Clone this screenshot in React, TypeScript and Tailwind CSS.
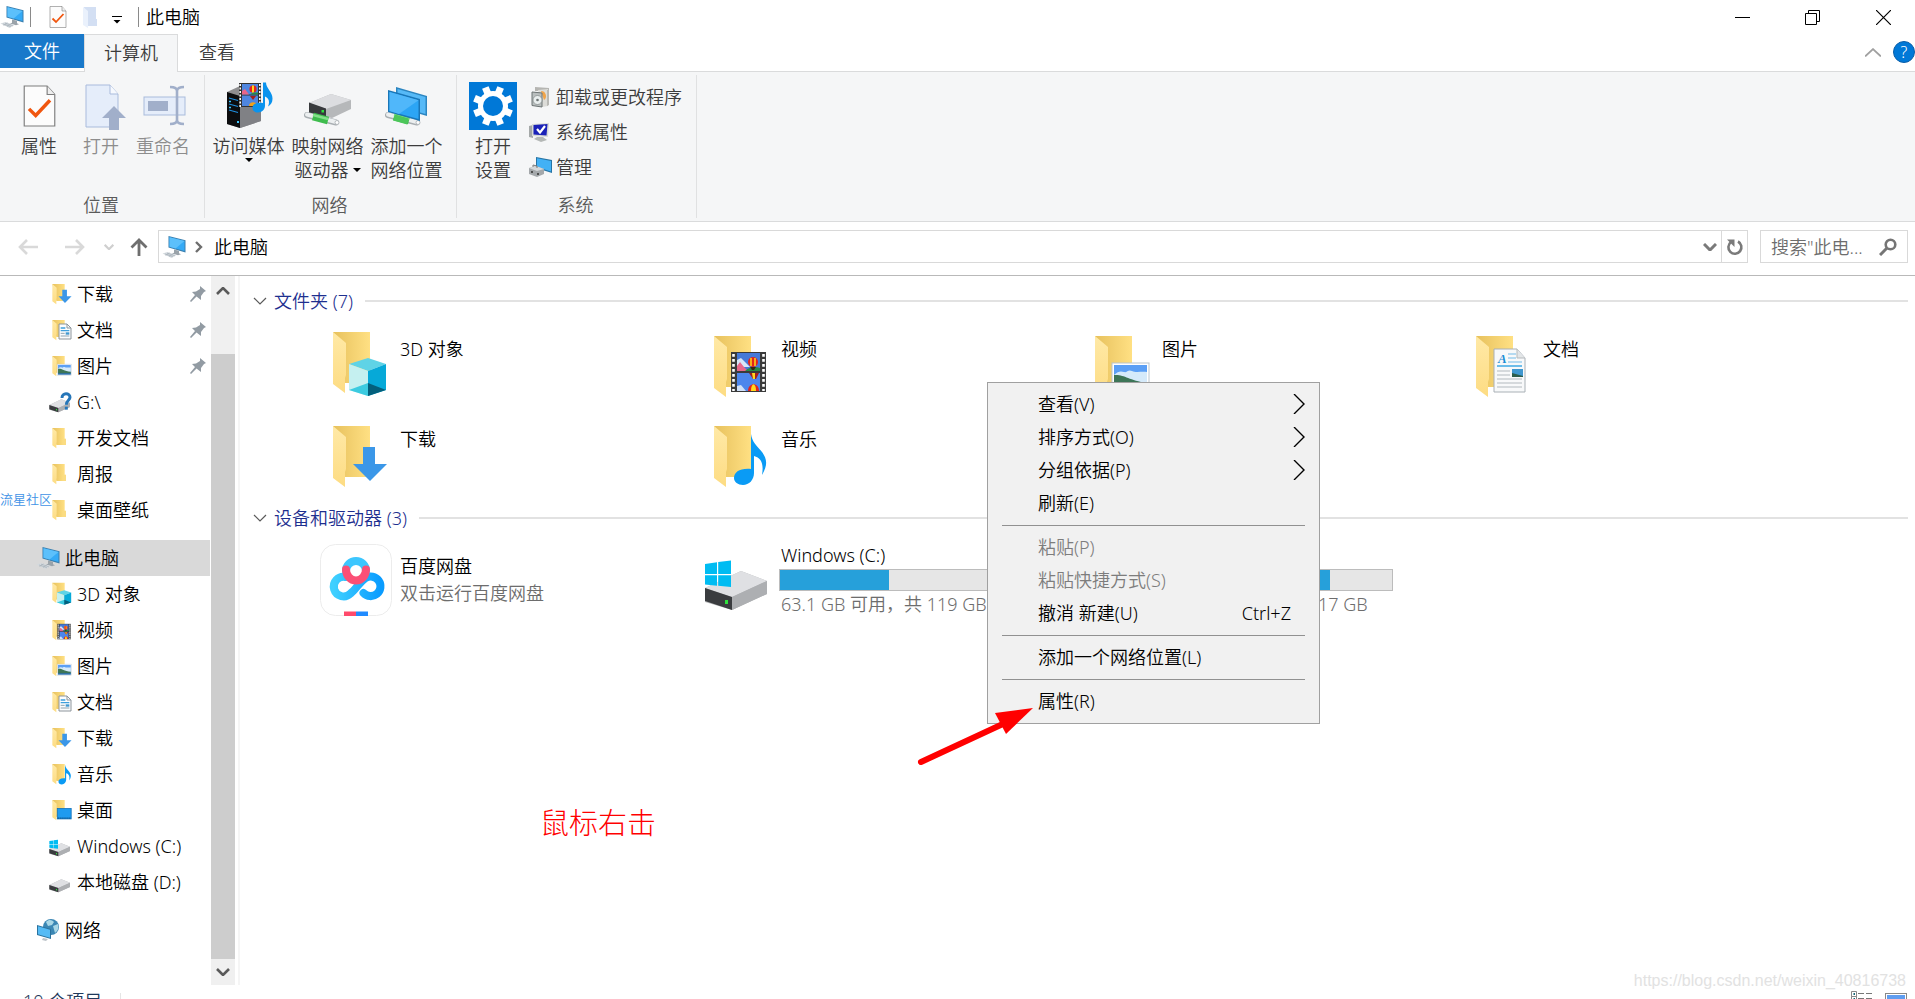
import { type ReactNode } from "react"

type Overlay = "download" | "document" | "picture" | "cube" | "video" | "music" | "desktop" | "none"

interface IconProps {
  className?: string
}

interface TreeItem {
  label: string
  icon: ReactNode
  pinned?: boolean
}

interface MenuItem {
  label: string
  submenu?: boolean
  disabled?: boolean
  shortcut?: string
}

function OverlayArt({ kind }: { kind: Overlay }) {
  if (kind === "download") {
    return <path d="M43 27h12v17h12L50 61 33 44h10z" fill="#3b97e8" />
  }
  if (kind === "music") {
    return (
      <path
        d="M50 14c1 8 6 12 11 18 5 7 6 13 0 23 2-12-1-17-8-19v17c0 7-5 12-11 12-5 0-9-3-9-7 0-6 6-10 17-9z"
        fill="#0a9bf5"
      />
    )
  }
  if (kind === "cube") {
    return (
      <g>
        <path d="M29 34l19-6 18 6-18 7z" fill="#5fd3e6" />
        <path d="M29 34l19 7v25l-19-6z" fill="#c5f0f0" />
        <path d="M66 34l-18 7v25l18-6z" fill="#06a9d8" />
        <path d="M29 60l19-7v13z" fill="#3ccbe0" />
        <path d="M66 60l-18-7v13z" fill="#03607c" />
      </g>
    )
  }
  if (kind === "video") {
    return (
      <g>
        <rect x="30" y="22" width="35" height="40" fill="#3a3a3a" />
        <path d="M32.5 24v37M62.5 24v37" stroke="#fff" strokeWidth="2.6" strokeDasharray="2.8 2.2" />
        <rect x="36" y="23" width="23" height="18" fill="#4579d8" />
        <rect x="36" y="43" width="23" height="18" fill="#4c86ec" />
        <path d="M36 30l4-2 6 6 3 3H36z" fill="#d7e6f8" />
        <path d="M36 36l3-4 4 5 4 4H36z" fill="#e8668a" />
        <path d="M44 41c4-4 10-5 15-3v3z" fill="#278a46" />
        <circle cx="52" cy="32" r="5" fill="#e3241c" />
        <path d="M50 28v8M54 28v8" stroke="#ffd91c" strokeWidth="1.5" />
        <path d="M49 37h6l-2 3h-2z" fill="#3a2610" />
        <path d="M48 43h10l-3 6h-3z" fill="#a3201c" />
        <path d="M51 43h3v6h-2z" fill="#ffd91c" />
        <path d="M36 56l4-1 5 6h-9z" fill="#cfe0f8" />
        <path d="M47 61c0-9 11-9 11 0z" fill="#e3241c" />
        <path d="M50 61c0-9 5-9 5 0z" fill="#ffd91c" />
      </g>
    )
  }
  if (kind === "picture") {
    return (
      <g>
        <rect x="30" y="33" width="37" height="29" fill="#fff" stroke="#b9c4cc" />
        <rect x="32" y="35" width="33" height="25" fill="#5b9ff5" />
        <path d="M32 45c4-4 7-4 10-3s4-3 8-1 10 0 15 1v13H32z" fill="#d5eafa" />
        <path d="M32 45c10-1 14 5 33 8v4H32z" fill="#3d7557" />
        <rect x="32" y="56" width="33" height="4" fill="#2f6f9c" />
      </g>
    )
  }
  if (kind === "document") {
    return (
      <g>
        <path d="M31 19h23l8 9v34H31z" fill="#f8f9fa" stroke="#a9b0b6" />
        <path d="M54 19v9h8" fill="#e3e6e8" stroke="#b5babd" />
        <text x="35" y="33" fontSize="13" fontStyle="italic" fontWeight="700" fontFamily="Liberation Serif, serif" fill="#1d8fd6">A</text>
        <path d="M45 24h8M45 28h8M45 32h14" stroke="#9fd0ee" strokeWidth="1.4" />
        <path d="M34 36h25" stroke="#6dbdea" strokeWidth="2" />
        <path d="M34 41h13M34 45h13M34 49h25M34 53h25M34 57h25" stroke="#c9ced2" strokeWidth="1.4" />
        <rect x="49" y="39" width="11" height="8" fill="#3f97cf" />
        <path d="M49 43l11 3v1H49z" fill="#2b5d4b" />
      </g>
    )
  }
  if (kind === "desktop") {
    return (
      <g>
        <rect x="30" y="34" width="36" height="27" fill="#1e9bf0" stroke="#0f6fb8" strokeWidth="2" />
        <path d="M31 59h34" stroke="#0b4f86" strokeWidth="3" strokeDasharray="3 2" />
      </g>
    )
  }
  return null
}

// Small folders carry a slightly enlarged overlay so it stays readable,
// and a simpler page drawing for documents
function SmallDocument() {
  return (
    <g>
      <path d="M33 18h24l12 12v33H33z" fill="#fbfcfd" stroke="#8d959b" strokeWidth="3" />
      <path d="M57 18v12h12" fill="none" stroke="#8d959b" strokeWidth="3" />
      <path d="M38 30h14M38 38h26" stroke="#3f9fdc" strokeWidth="4" />
      <path d="M38 46h12M38 54h26" stroke="#8fa3b0" strokeWidth="3" />
      <rect x="53" y="43" width="11" height="7" fill="#3f97cf" />
    </g>
  )
}

function FolderIcon({ kind = "none", small = false }: { kind?: Overlay; small?: boolean }) {
  return (
    <svg viewBox="0 0 72 72" className={small ? "size-6 shrink-0" : "size-[72px] shrink-0"}>
      <defs>
        <linearGradient id="folderBack" x1="0" y1="0" x2="1" y2="0">
          <stop offset="0" stopColor="#e7c15d" />
          <stop offset="1" stopColor="#ffe083" />
        </linearGradient>
        <linearGradient id="folderFlap" x1="0" y1="0" x2="0" y2="1">
          <stop offset="0" stopColor="#ffe9a6" />
          <stop offset="1" stopColor="#fddc83" />
        </linearGradient>
      </defs>
      <g transform={kind === "cube" ? "translate(0 -4)" : undefined}>
        <path d="M13 6h37v51H25z" fill="url(#folderBack)" />
        {kind === "none" && <path d="M44 38h10v19H44z" fill="#fbdc82" />}
        <path d="M13 6l13 11v32l-1 3v15L13 58z" fill="url(#folderFlap)" />
      </g>
      {small && kind === "document" ? (
        <SmallDocument />
      ) : (
        <g transform={small ? "translate(-7 -8) scale(1.16)" : undefined}>
          <OverlayArt kind={kind} />
        </g>
      )}
    </svg>
  )
}

function ComputerIcon({ className = "size-6" }: IconProps) {
  return (
    <svg viewBox="0 0 24 24" className={className}>
      <path d="M6.500 1l17 4.300v12.200L6.500 12.500z" fill="#3a7fae" />
      <path d="M7.500 2.200l15 3.900v10l-15-4.400z" fill="#35aaf6" />
      <path d="M7.500 2.200l15 3.900-9 7.300-6-1.700z" fill="#5cc0fb" />
      <path d="M12 14.500l5 1.300v2.500l2 1-3 1-6-1.800 2-.8z" fill="#9aa3aa" />
      <path d="M.5 18.500l5-1.500 9 3-5 3z" fill="#d3d9de" />
      <path d="M3 19l8 2.800M5 18.200l8 2.700M3.500 20.500l4-2.500M7 21.500l4-2.600" stroke="#a3adb5" strokeWidth=".6" />
    </svg>
  )
}

function DriveArt() {
  return (
    <g>
      <path d="M4 42l36-17 26 10v13L31 64 4 56z" fill="#b4b6b8" />
      <path d="M4 42l36-17 26 10-35 16z" fill="#dfe0e3" />
      <path d="M31 51l35-16v13L31 64z" fill="#adafb2" />
      <path d="M4 42l27 9v13L4 55z" fill="#3a3c3f" />
      <rect x="24" y="54" width="3" height="4" fill="#2fe23d" />
    </g>
  )
}

function DriveIcon({ windows = false, unknown = false, className = "size-6" }: IconProps & { windows?: boolean; unknown?: boolean }) {
  return (
    <svg viewBox="0 0 72 72" className={className}>
      <g transform="translate(0 3)">
        <DriveArt />
      </g>
      {windows && (
        <path d="M4 21l12-1.800V31H4zM17.200 19L30 17.500V31H17.200zM4 32.200h12v10.500L4 41.500zM17.200 32.200H30V44l-12.800-1.200z" fill="#00bcf2" />
      )}
      {unknown && (
        <g fill="none" stroke="#2676b8" strokeWidth="9">
          <path d="M42 24c0-17 24-16 24-2 0 9-11 9-11 22" />
          <path d="M55 50v9" />
        </g>
      )}
    </svg>
  )
}

function NetworkIcon() {
  return (
    <svg viewBox="0 0 24 24" className="size-6">
      <circle cx="15" cy="9" r="8" fill="#3b87b4" />
      <path d="M10 4c3-3 6-2 8 0l-2 3-4 1zM17 8l5-2c1 4 0 7-3 9z" fill="#a9d7e6" />
      <path d="M1 7l14 4v10L1 17z" fill="#2b739f" />
      <path d="M2 8.300l12 3.400v8L2 16.200z" fill="#55bbf5" />
      <path d="M7 20l5 1-2 2-4-1z" fill="#bcc3c8" />
    </svg>
  )
}

function CheckPageIcon({ className }: IconProps) {
  return (
    <svg viewBox="0 0 34 44" className={className}>
      <path d="M1 1h24l8 9v33H1z" fill="#fcfcfc" stroke="#7d7d7d" strokeWidth="1.200" />
      <path d="M25 1v9h8" fill="#eee" stroke="#7d7d7d" strokeWidth="1.200" />
      <path d="M6 25l7 7 15-16" fill="none" stroke="#f0560f" strokeWidth="3.600" />
    </svg>
  )
}

function OpenIcon() {
  return (
    <svg viewBox="0 0 42 48" className="h-12 w-[42px]">
      <path d="M1 3h24l8 9v33H1z" fill="#e5edfa" stroke="#a9bbdc" />
      <path d="M25 3v9h8" fill="#f6f9fe" stroke="#a9bbdc" />
      <path d="M29 24l12 12h-7v12H24V36h-7z" fill="#a1afca" />
    </svg>
  )
}

function RenameIcon() {
  return (
    <svg viewBox="0 0 44 48" className="h-12 w-11">
      <rect x="1" y="15" width="41" height="18" fill="#e5edfa" stroke="#a9bbdc" />
      <rect x="5" y="19" width="20" height="10" fill="#a1afca" />
      <path d="M34 8v32M27 5c4 0 7 1 7 4 0-3 3-4 7-4M27 42c4 0 7-1 7-4 0 3 3 4 7 4" fill="none" stroke="#a1afca" strokeWidth="2.600" />
    </svg>
  )
}

function MediaIcon() {
  return (
    <svg viewBox="0 0 48 48" className="size-12">
      <path d="M2 10l13-6 21 4v31L15 46 2 42z" fill="#8e8e90" />
      <path d="M15 14l21-6v31l-21 7z" fill="#808185" />
      <path d="M2 10l13 4v32L2 42z" fill="#0c0d0f" />
      <path d="M4 16l9 2.500M4 22l9 2.500M4 28l9 2.500" stroke="#1f8fe0" strokeWidth="1.200" />
      <path d="M4 19.500h2M4 25.500h2" stroke="#40c8ff" strokeWidth="1.600" />
      <rect x="12" y="39" width="2" height="2" fill="#40c8ff" />
      <rect x="14" y="1" width="22" height="24" fill="#333" />
      <path d="M15.200 2v23M34.800 2v23" stroke="#fff" strokeWidth="1.600" strokeDasharray="2 1.500" />
      <rect x="17" y="2" width="16" height="10.500" fill="#4f86e0" />
      <rect x="17" y="13.500" width="16" height="10.500" fill="#4f86e0" />
      <circle cx="28" cy="7" r="3.600" fill="#e3241c" />
      <path d="M28 3.500v7" stroke="#ffd91c" strokeWidth="2" />
      <path d="M17 9l3-2 4 5.500h-7z" fill="#e8668a" />
      <path d="M25 12.500c2-2 5-2 8-2v2z" fill="#278a46" />
      <path d="M24 24c0-5 8-5 8 0z" fill="#f0a01c" />
      <path d="M25 14h6l-3 4z" fill="#a3201c" />
      <path d="M38 .5h3c0 6 6.500 9 6.500 16 0 4-1.500 6-4.500 8 2-5 1-8-3-10v9c0 4-3 7-7 7-3.500 0-5.500-2-5.500-4.500 0-4 4-6 10.500-5z" fill="#0a93ee" />
    </svg>
  )
}

function Cable() {
  return (
    <g>
      <path d="M3 30l29 7.500" stroke="#a9afb3" strokeWidth="6" strokeLinecap="round" />
      <path d="M3 29.500l29 7.500" stroke="#eceff0" strokeWidth="4" strokeLinecap="round" />
      <circle cx="33" cy="37.500" r="2" fill="#fff" stroke="#b5babd" />
      <path d="M9 31.500l15 4" stroke="#3ebc4d" strokeWidth="8" />
      <path d="M9 30l15 4" stroke="#84e08b" strokeWidth="2.500" />
    </g>
  )
}

function MapDriveIcon() {
  return (
    <svg viewBox="0 0 48 42" className="h-[42px] w-12">
      <path d="M5 18l22-9 20 6v9L28 33 5 28z" fill="#b6b8ba" />
      <path d="M5 18l22-9 20 6-25 9z" fill="#dcdde0" />
      <path d="M5 17.500l17 6v10L5 28z" fill="#37393c" />
      <rect x="17.500" y="25" width="2.500" height="2.500" fill="#2fe23d" />
      <Cable />
    </svg>
  )
}

function NetworkPlaceIcon() {
  return (
    <svg viewBox="0 0 44 42" className="h-[42px] w-11">
      <path d="M11 2l31 9v20l-31-9z" fill="#2c85c0" />
      <path d="M12.500 4l28 8v17l-28-8z" fill="#56b9f7" />
      <Cable />
      <path d="M3 5l32 9v22L3 27z" fill="#1976b8" />
      <path d="M4.500 7l29 8.200V34L4.500 26z" fill="#2ca5f5" />
      <path d="M4.500 7l29 8.200L14 29l-9.500-3z" fill="#50b7fa" />
      <path d="M9 32.500l14 4" stroke="#4cc65a" strokeWidth="6" />
    </svg>
  )
}

function SettingsIcon() {
  return (
    <svg viewBox="0 0 48 48" className="size-12">
      <rect width="48" height="48" fill="#0078d7" />
      <g fill="#fff" transform="rotate(22.500 24 24)">
        <rect x="20.500" y="4" width="7" height="40" />
        <rect x="20.500" y="4" width="7" height="40" transform="rotate(45 24 24)" />
        <rect x="20.500" y="4" width="7" height="40" transform="rotate(90 24 24)" />
        <rect x="20.500" y="4" width="7" height="40" transform="rotate(135 24 24)" />
        <circle cx="24" cy="24" r="15" />
      </g>
      <circle cx="24" cy="24" r="10" fill="#0078d7" />
    </svg>
  )
}

function ProgramsIcon() {
  return (
    <svg viewBox="0 0 22 22" className="size-[22px]">
      <path d="M5 1l14 1v3H5z" fill="#b5b5b2" />
      <path d="M8 4l10-1v17l-6 1z" fill="#dcdcd8" />
      <path d="M17 4h2v15l-2 1z" fill="#b9b9b5" />
      <path d="M11 5a5 5 0 0 1 3 9z" fill="#f0a44a" />
      <path d="M2 6l10 1v14l-10-1.500z" fill="#b9bebe" stroke="#6d7474" />
      <circle cx="7.500" cy="14" r="4.500" fill="#e9eeee" stroke="#7f8787" strokeWidth=".7" />
      <circle cx="7.500" cy="14" r="1.300" fill="#6d7474" />
    </svg>
  )
}

function SystemIcon() {
  return (
    <svg viewBox="0 0 22 22" className="size-[22px]">
      <path d="M1 5l4-1v13l-4-1z" fill="#a4a8a8" />
      <path d="M4 3l17-1-1 14L4 15z" fill="#d7dad6" />
      <path d="M5.500 4l14-1-1 11.500-13-1z" fill="#1a22b8" />
      <path d="M9 8l3 3.500L17 5" fill="none" stroke="#fff" strokeWidth="2.200" />
      <path d="M9 16h6l4 3-6 2-7-3z" fill="#b4b8b6" />
    </svg>
  )
}

function ManageIcon() {
  return (
    <svg viewBox="0 0 24 22" className="h-[22px] w-6">
      <path d="M8 1l16 3v13L8 12z" fill="#2674a5" />
      <path d="M9 2.200l14 2.700v10.700L9 11z" fill="#42b1f5" />
      <path d="M1 12l7-2 8 3v5l-7 3-8-3z" fill="#a4a8ab" />
      <path d="M1 12l7-2 8 3-7 2z" fill="#d5d8da" />
      <path d="M5 11V9l4 1v2" fill="none" stroke="#777" />
      <path d="M4 15v2M10 17v2" stroke="#333" strokeWidth="1.500" />
    </svg>
  )
}

function BaiduIcon() {
  return (
    <svg viewBox="0 0 72 72" className="size-[72px] shrink-0">
      <defs>
        <linearGradient id="baiduBlue" x1="0" y1="0" x2="1" y2="0">
          <stop offset="0" stopColor="#3fd0ff" />
          <stop offset="1" stopColor="#0a9cff" />
        </linearGradient>
      </defs>
      <rect x=".5" y=".5" width="71" height="71" rx="15" fill="#fff" stroke="#ececec" />
      <g fill="none" strokeWidth="8" strokeLinecap="round">
        <path d="M43.500 49a9.800 9.800 0 1 0 2-15c-7 5-9 11-15 15.500a9.800 9.800 0 1 1-5-16.500" stroke="url(#baiduBlue)" />
        <path d="M26 27a10 10 0 0 1 20 0" stroke="#3cc6fe" />
        <path d="M26 25.500a10 11 0 0 0 20 0" stroke="#fb4f76" />
      </g>
      <path d="M24 67.500h12V72H24z" fill="#ff4a6b" />
      <path d="M36 67.500h12V72H36z" fill="#1f8bff" />
    </svg>
  )
}

function PinIcon() {
  return (
    <svg viewBox="0 0 16 16" className="size-4">
      <path d="M10 0l6 5-2 1-3 4v4L6.500 10.500 1 16l-1-1 5-6L2 6l4-.5L10 3z" fill="#929ba3" />
    </svg>
  )
}

function Chevron({ className, d = "M1 1l6 6 6-6", width = 1.2 }: IconProps & { d?: string; width?: number }) {
  return (
    <svg viewBox="0 0 14 8" className={className}>
      <path d={d} fill="none" stroke="currentColor" strokeWidth={width} />
    </svg>
  )
}

const quickAccess: TreeItem[] = [
  { label: "下载", icon: <FolderIcon kind="download" small />, pinned: true },
  { label: "文档", icon: <FolderIcon kind="document" small />, pinned: true },
  { label: "图片", icon: <FolderIcon kind="picture" small />, pinned: true },
  { label: "G:\\", icon: <DriveIcon unknown /> },
  { label: "开发文档", icon: <FolderIcon small /> },
  { label: "周报", icon: <FolderIcon small /> },
  { label: "桌面壁纸", icon: <FolderIcon small /> },
]

const computerItems: TreeItem[] = [
  { label: "3D 对象", icon: <FolderIcon kind="cube" small /> },
  { label: "视频", icon: <FolderIcon kind="video" small /> },
  { label: "图片", icon: <FolderIcon kind="picture" small /> },
  { label: "文档", icon: <FolderIcon kind="document" small /> },
  { label: "下载", icon: <FolderIcon kind="download" small /> },
  { label: "音乐", icon: <FolderIcon kind="music" small /> },
  { label: "桌面", icon: <FolderIcon kind="desktop" small /> },
  { label: "Windows (C:)", icon: <DriveIcon windows /> },
  { label: "本地磁盘 (D:)", icon: <DriveIcon /> },
]

const folders: { label: string; kind: Overlay }[] = [
  { label: "3D 对象", kind: "cube" },
  { label: "视频", kind: "video" },
  { label: "图片", kind: "picture" },
  { label: "文档", kind: "document" },
  { label: "下载", kind: "download" },
  { label: "音乐", kind: "music" },
  { label: "桌面", kind: "desktop" },
]

const menuSections: MenuItem[][] = [
  [
    { label: "查看(V)", submenu: true },
    { label: "排序方式(O)", submenu: true },
    { label: "分组依据(P)", submenu: true },
    { label: "刷新(E)" },
  ],
  [
    { label: "粘贴(P)", disabled: true },
    { label: "粘贴快捷方式(S)", disabled: true },
    { label: "撤消 新建(U)", shortcut: "Ctrl+Z" },
  ],
  [{ label: "添加一个网络位置(L)" }],
  [{ label: "属性(R)" }],
]

function TitleBar() {
  return (
    <header className="flex h-[34px] items-center">
      <ComputerIcon className="size-6" />
      <span className="ml-1.5 h-5 w-px bg-[#8a8a8a]" />
      <button aria-label="属性" className="ml-[18px]"><CheckPageIcon className="h-[22px] w-[18px]" /></button>
      <button aria-label="新建文件夹" className="ml-4">
        <svg viewBox="0 0 14 21" className="h-[21px] w-3.5">
          <path d="M1 0h12v12h1v7H4z" fill="#d3dff3" />
          <path d="M0 0l5 4v17l-5-3z" fill="#eaf1fc" />
        </svg>
      </button>
      <button aria-label="自定义快速访问工具栏" className="ml-[15px] pt-1.5">
        <svg viewBox="0 0 10 8" className="h-2 w-2.5">
          <path d="M0 .5h10" stroke="#000" />
          <path d="M1.500 4h7L5 7.500z" />
        </svg>
      </button>
      <span className="ml-4 h-5 w-px bg-[#8a8a8a]" />
      <h1 className="ml-[7px]">此电脑</h1>
      <div className="ml-auto flex">
        <button aria-label="最小化" className="flex h-8 w-[70px] items-center justify-center">
          <svg viewBox="0 0 15 15" className="size-[15px]"><path d="M0 7.500h15" stroke="#000" /></svg>
        </button>
        <button aria-label="向下还原" className="mr-1 flex h-8 w-[70px] items-center justify-center">
          <svg viewBox="0 0 15 15" className="size-[15px]" fill="none" stroke="#000">
            <path d="M.5 3.500h11v11H.5zM3.500 3.500v-3h11v11h-3" />
          </svg>
        </button>
        <button aria-label="关闭" className="flex h-8 w-16 items-center justify-center">
          <svg viewBox="0 0 15 15" className="size-[15px]"><path d="M0 0l15 15M15 0L0 15" stroke="#000" strokeWidth="1.200" /></svg>
        </button>
      </div>
    </header>
  )
}

function Tabs() {
  return (
    <nav className="flex h-[38px] items-start border-b border-[#dadbdc] text-[#3c3c3c]">
      <button className="h-[34px] w-[84px] bg-[#1979ca] text-white">文件</button>
      <button className="h-[38px] w-[94px] border border-b-0 border-[#dadbdc] bg-[#f5f6f7] pb-0.5">计算机</button>
      <button className="h-9 px-[21px]">查看</button>
      <div className="ml-auto flex h-9 items-center gap-3">
        <button aria-label="最小化功能区" className="text-[#a0a0a0]">
          <Chevron className="h-[9px] w-4" d="M0 7.500L7 1l7 6.500" width={1.6} />
        </button>
        <button aria-label="帮助" className="flex size-[22px] items-center justify-center rounded-full border border-[#0a5ea8] bg-[#0078d7] text-[16px] leading-none text-white">?</button>
      </div>
    </nav>
  )
}

function BigButton({ icon, lines, className = "", disabled = false, arrow }: {
  icon: ReactNode
  lines: string[]
  className?: string
  disabled?: boolean
  arrow?: "below" | "inline"
}) {
  const triangle = <svg viewBox="0 0 8 4" className="h-1 w-2"><path d="M0 0h8L4 4z" fill="#000" /></svg>
  return (
    <button disabled={disabled} className={`flex flex-col items-center whitespace-nowrap leading-6 ${disabled ? "text-[#8d8d8d]" : "text-[#3c3c3c]"} ${className}`}>
      <span className="mb-1 flex h-12 items-center justify-center">{icon}</span>
      {lines.map((line, i) => (
        <span key={line} className="flex items-center gap-1">
          {line}
          {arrow === "inline" && i === lines.length - 1 && triangle}
        </span>
      ))}
      {arrow === "below" && triangle}
    </button>
  )
}

function RibbonGroup({ label, className = "", children }: { label: string; className?: string; children: ReactNode }) {
  return (
    <section className={`mt-[3px] flex h-[143px] flex-col border-r border-[#e0e1e2] ${className}`}>
      <div className="flex flex-1 pt-[7px]">{children}</div>
      <h2 className="h-[25px] pr-0.5 text-center leading-6 text-[#5a5a5a]">{label}</h2>
    </section>
  )
}

function Ribbon() {
  return (
    <div className="flex h-[150px] shrink-0 border-b border-[#dadbdc] bg-[#f5f6f7]">
      <RibbonGroup label="位置" className="w-[205px]">
        <BigButton icon={<CheckPageIcon className="h-[42px] w-[33px]" />} lines={["属性"]} className="ml-2 w-[62px]" />
        <BigButton icon={<span className="pl-2.5"><OpenIcon /></span>} lines={["打开"]} className="w-[62px]" disabled />
        <BigButton icon={<span className="pl-1"><RenameIcon /></span>} lines={["重命名"]} className="w-[62px]" disabled />
      </RibbonGroup>
      <RibbonGroup label="网络" className="w-[252px]">
        <BigButton icon={<MediaIcon />} lines={["访问媒体"]} className="ml-1 w-[79px]" arrow="below" />
        <BigButton icon={<MapDriveIcon />} lines={["映射网络", "驱动器"]} className="w-[79px]" arrow="inline" />
        <BigButton icon={<NetworkPlaceIcon />} lines={["添加一个", "网络位置"]} className="w-[79px]" />
      </RibbonGroup>
      <RibbonGroup label="系统" className="w-[240px]">
        <BigButton icon={<SettingsIcon />} lines={["打开", "设置"]} className="ml-[5px] w-[62px]" />
        <div className="-mt-[3px] ml-1 flex flex-col text-[#3c3c3c]">
          <button className="flex h-[35px] items-center gap-1"><span className="w-6 pl-0.5"><ProgramsIcon /></span>卸载或更改程序</button>
          <button className="flex h-[35px] items-center gap-1"><span className="w-6"><SystemIcon /></span>系统属性</button>
          <button className="flex h-[35px] items-center gap-1"><span className="w-6"><ManageIcon /></span>管理</button>
        </div>
      </RibbonGroup>
    </div>
  )
}

function AddressBar() {
  return (
    <div className="flex h-[54px] shrink-0 items-center border-b border-[#b9b9b9] pr-[7px] pb-1">
      <button aria-label="返回" className="ml-[18px]">
        <svg viewBox="0 0 20 16" className="h-4 w-5"><path d="M20 8H2M9 1L2 8l7 7" fill="none" stroke="#d9d9d9" strokeWidth="2.600" /></svg>
      </button>
      <button aria-label="前进" className="ml-[27px]">
        <svg viewBox="0 0 20 16" className="h-4 w-5"><path d="M0 8h18M11 1l7 7-7 7" fill="none" stroke="#d9d9d9" strokeWidth="2.600" /></svg>
      </button>
      <button aria-label="最近浏览的位置" className="ml-[19px] text-[#cfcfcf]">
        <Chevron className="h-[6px] w-[10px]" width={3} />
      </button>
      <button aria-label="上移" className="ml-4">
        <svg viewBox="0 0 18 18" className="size-[18px]"><path d="M9 18V2M1.500 9.500L9 2l7.500 7.500" fill="none" stroke="#6e6e6e" strokeWidth="2.800" /></svg>
      </button>
      <div className="ml-2.5 flex h-[33px] flex-1 items-center border border-[#d9d9d9] pl-[3px]">
        <ComputerIcon className="size-6" />
        <svg viewBox="0 0 8 12" className="ml-[9px] h-3 w-2"><path d="M1 1l5 5-5 5" fill="none" stroke="#6e6e6e" strokeWidth="2.400" /></svg>
        <span className="ml-[11px]">此电脑</span>
        <button aria-label="上一个位置" className="mr-1 ml-auto text-[#7a7a7a]">
          <Chevron className="h-2 w-3.5" width={3} />
        </button>
        <button aria-label="刷新" className="flex h-full w-[26px] items-center justify-center border-l border-[#d9d9d9]">
          <svg viewBox="0 0 18 18" className="size-[18px]">
            <path d="M12 3.500a6.500 6.500 0 1 1-7 .5" fill="none" stroke="#7a7a7a" strokeWidth="2.600" />
            <path d="M1 1.500h7.500V9z" fill="#7a7a7a" />
          </svg>
        </button>
      </div>
      <label className="ml-3 flex h-[33px] w-[148px] items-center border border-[#d9d9d9] px-2.5">
        <input aria-label="搜索" placeholder={'搜索"此电...'} className="w-24 flex-1 bg-transparent outline-none placeholder:text-[#6d6d6d]" />
        <svg viewBox="0 0 18 18" className="size-[18px]">
          <circle cx="11.500" cy="6.500" r="4.800" fill="none" stroke="#757575" strokeWidth="2.600" />
          <path d="M8 10l-7 7" stroke="#757575" strokeWidth="3" />
        </svg>
      </label>
    </div>
  )
}

function TreeRow({ item, root = false, selected = false }: { item: TreeItem; root?: boolean; selected?: boolean }) {
  return (
    <li>
      <a href="#" className={`flex h-9 items-center ${root ? "gap-[5px] pl-9" : "gap-[5px] pl-12"} ${selected ? "bg-[#d9d9d9]" : ""}`}>
        {item.icon}
        <span>{item.label}</span>
        {item.pinned && <span className="mr-1 ml-auto"><PinIcon /></span>}
      </a>
    </li>
  )
}

function Sidebar() {
  return (
    <aside className="flex w-[240px] shrink-0 border-r-2 border-[#f5f5f5]">
      <ul className="w-[210px] overflow-hidden">
        {quickAccess.map(item => <TreeRow key={item.label} item={item} />)}
        <li className="h-3" />
        <TreeRow item={{ label: "此电脑", icon: <ComputerIcon /> }} root selected />
        {computerItems.map(item => <TreeRow key={item.label} item={item} />)}
        <li className="h-3" />
        <TreeRow item={{ label: "网络", icon: <NetworkIcon /> }} root />
      </ul>
      <div className="ml-px flex w-6 flex-col bg-[#f0f0f0] text-[#5a5a5a]">
        <button aria-label="向上滚动" className="flex h-[30px] shrink-0 items-center justify-center">
          <Chevron className="h-2 w-3.5" d="M1 7l6-6 6 6" width={2.6} />
        </button>
        <div className="mt-12 flex-1 bg-[#cdcdcd]" />
        <button aria-label="向下滚动" className="flex h-[26px] shrink-0 items-center justify-center">
          <Chevron className="h-2 w-3.5" width={2.6} />
        </button>
      </div>
    </aside>
  )
}

function GroupHeading({ title }: { title: string }) {
  return (
    <h2 className="flex h-9 items-center pr-[7px] pl-[13px] text-[#1e2f8f]">
      <Chevron className="h-2 w-3.5 text-[#5a5a5a]" />
      <span className="ml-[7px]">{title}</span>
      <span className="ml-3 h-0.5 flex-1 bg-[#e2e2e2]" />
    </h2>
  )
}

function DriveTile({ name, used, info }: { name: string; used: number; info: string }) {
  return (
    <li className="flex gap-1.5">
      <DriveIcon windows={name.startsWith("Windows")} className="size-[72px] shrink-0" />
      <div className="w-[233px]">
        <p className="pb-0.5 pl-0.5 leading-6">{name}</p>
        <div className="h-[22px] border border-[#bcbcbc] bg-[#e6e6e6]">
          <div className="h-full bg-[#26a0da]" style={{ width: `${used}%` }} />
        </div>
        <p className="pt-px pl-0.5 leading-6 whitespace-nowrap text-[#6d6d6d]">{info}</p>
      </div>
    </li>
  )
}

function Content() {
  return (
    <main className="flex-1 pt-[7px]">
      <GroupHeading title="文件夹 (7)" />
      <ul className="mt-[11px] grid grid-cols-[repeat(auto-fill,381px)] gap-y-[18px] pl-20">
        {folders.map(folder => (
          <li key={folder.label} className="flex gap-2">
            <FolderIcon kind={folder.kind} />
            <span className="pt-[7px] leading-6">{folder.label}</span>
          </li>
        ))}
      </ul>
      <div className="h-2" />
      <GroupHeading title="设备和驱动器 (3)" />
      <ul className="mt-[7px] grid grid-cols-[repeat(auto-fill,381px)] pl-20">
        <li className="flex items-center gap-2">
          <BaiduIcon />
          <div className="leading-[27px]">
            <p>百度网盘</p>
            <p className="text-[#6d6d6d]">双击运行百度网盘</p>
          </div>
        </li>
        <DriveTile name="Windows (C:)" used={47} info="63.1 GB 可用，共 119 GB" />
        <DriveTile name="本地磁盘 (D:)" used={73} info="58.6 GB 可用，共 217 GB" />
      </ul>
    </main>
  )
}

function ContextMenu() {
  return (
    <div role="menu" className="absolute top-[382px] left-[987px] w-[333px] border border-[#a0a0a0] bg-[#f1f1f1] pt-1 pb-1.5">
      {menuSections.map((section, i) => (
        <div key={i}>
          {i > 0 && <hr className="mx-3.5 mt-1.5 mb-1 border-[#919191]" />}
          {section.map(item => (
            <button
              key={item.label}
              role="menuitem"
              disabled={item.disabled}
              className={`flex h-[33px] w-full items-center justify-between pl-[50px] ${item.submenu ? "pr-3.5" : "pr-7"} ${item.disabled ? "text-[#7d7d7d]" : ""}`}
            >
              {item.label}
              {item.shortcut && <span>{item.shortcut}</span>}
              {item.submenu && (
                <svg viewBox="0 0 12 20" className="h-5 w-3"><path d="M1 0l10 10L1 20" fill="none" stroke="#000" strokeWidth="1.400" /></svg>
              )}
            </button>
          ))}
        </div>
      ))}
    </div>
  )
}

function StatusBar() {
  return (
    <footer className="flex h-3.5 shrink-0 items-start overflow-hidden pr-2 pl-[23px] text-[#1e395b]">
      <span className="pt-1 leading-6">10 个项目</span>
      <span className="mt-2 ml-[18px] h-6 w-px bg-[#e5e5e5]" />
      <div className="ml-auto flex gap-3 pt-1.5">
        <button aria-label="详细信息">
          <svg viewBox="0 0 22 16" className="h-4 w-[22px]">
            <path d="M.5.500h5v5h-5zM.5 5.500h5v5h-5z" fill="#fff" stroke="#888" />
            <path d="M2.500 3h1.500M2.500 8h1.500" stroke="#16697a" strokeWidth="2" />
            <path d="M7 2.500h6M15 2.500h6M7 7.500h6M15 7.500h6" stroke="#777" />
          </svg>
        </button>
        <button aria-label="大图标">
          <svg viewBox="0 0 22 16" className="h-4 w-[22px]">
            <rect x=".5" y="2.500" width="21" height="13" fill="#fff" stroke="#888" />
            <rect x="2" y="4" width="18" height="10" fill="#5f9df0" />
          </svg>
        </button>
      </div>
    </footer>
  )
}

export default function App() {
  return (
    <div className="relative flex h-screen flex-col overflow-hidden bg-white font-['Noto_Sans','Noto_Sans_CJK_SC',sans-serif] text-[18px] leading-6 font-[350] text-black">
      <TitleBar />
      <Tabs />
      <Ribbon />
      <AddressBar />
      <div className="flex min-h-0 flex-1">
        <Sidebar />
        <Content />
      </div>
      <StatusBar />
      <ContextMenu />

      {/* Annotations on top of the window */}
      <svg viewBox="0 0 116 62" className="absolute top-[706px] left-[917px] h-[62px] w-[116px]">
        <path d="M4 56L88 17" stroke="#f00" strokeWidth="6" strokeLinecap="round" />
        <path d="M116 2L78 7l11 21z" fill="#f00" />
      </svg>
      <p className="absolute top-[803px] left-[540px] font-['Noto_Sans_CJK_SC',sans-serif] text-[29px] leading-9 font-light text-[#f00]">鼠标右击</p>
      <p className="absolute top-[491px] left-0 text-[13px] leading-4 text-[#3f93e6]">流星社区</p>
      <p className="absolute right-[9px] bottom-2 font-['Liberation_Sans',sans-serif] text-[16px] leading-5 text-[#e2e2e2]">https://blog.csdn.net/weixin_40816738</p>
    </div>
  )
}
